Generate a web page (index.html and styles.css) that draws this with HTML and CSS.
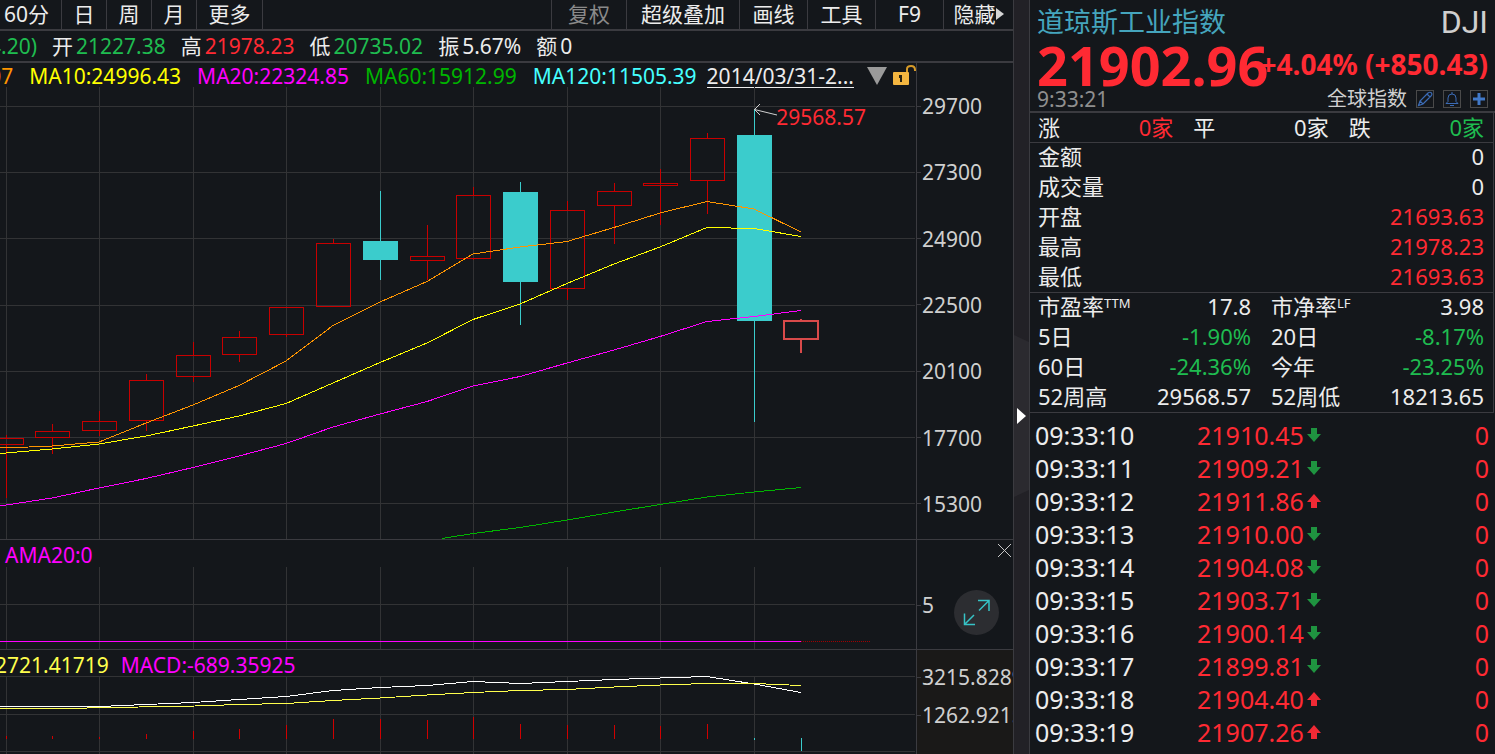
FILE: index.html
```html
<!DOCTYPE html>
<html lang="zh-CN">
<head>
<meta charset="utf-8">
<title>道琼斯工业指数 DJI</title>
<link rel="stylesheet" href="styles.css">
</head>
<body>
<main class="terminal">
  <section class="chart">
    <nav class="toolbar">
      <div class="tabs">
        <button class="tab tab-first">60分</button>
        <button class="tab">日</button>
        <button class="tab">周</button>
        <button class="tab">月</button>
        <button class="tab tab-more">更多</button>
      </div>
      <div class="tools">
        <button class="tool tool-adjust" disabled>复权</button>
        <button class="tool tool-overlay">超级叠加</button>
        <button class="tool">画线</button>
        <button class="tool">工具</button>
        <button class="tool">F9</button>
        <button class="tool tool-hide">隐藏<svg width="8" height="12" viewBox="0 0 8 12"><path d="M0 0L8 6L0 12Z" fill="#d5d5d5"/></svg></button>
      </div>
    </nav>

    <div class="summary">
      <span class="down">4.20)</span>
      <span class="pair">开<b class="down">21227.38</b></span>
      <span class="pair">高<b class="up">21978.23</b></span>
      <span class="pair">低<b class="down">20735.02</b></span>
      <span class="pair">振<b>5.67%</b></span>
      <span class="pair">额<b>0</b></span>
    </div>

    <div class="pane pane-price">
      <div class="plot">
        <div class="legend legend-ma">
          <span class="ma5">07</span>
          <span class="ma10">MA10:24996.43</span>
          <span class="ma20">MA20:22324.85</span>
          <span class="ma60">MA60:15912.99</span>
          <span class="ma120">MA120:11505.39</span>
          <button class="range">2014/03/31-2...</button>
          <button class="icon-button" aria-label="展开"><svg width="20" height="18" viewBox="0 0 20 18"><path d="M0 0H20L10 18Z" fill="#9a9a9a"/></svg></button>
          <button class="icon-button icon-lock" aria-label="锁定"><svg width="23" height="20" viewBox="0 0 23 20"><rect x="0" y="7" width="16" height="13" rx="1" fill="#f4b640"/><path d="M14 7V4Q14 1 18 1Q22 1 22 5V6" fill="none" stroke="#d69a28" stroke-width="2"/><path d="M6 10H9V17H7V13H6Z" fill="#2a2210"/></svg></button>
        </div>
        <svg class="canvas" viewBox="0 87 916 452" preserveAspectRatio="none">
          <path class="grid-line" d="M6.5 87V539M99.5 87V539M193.5 87V539M286.5 87V539M380.5 87V539M473.5 87V539M567.5 87V539M660.5 87V539M754.5 87V539M0 106.5H915M0 172.5H915M0 238.5H915M0 305.5H915M0 371.5H915M0 437.5H915M0 503.5H915"/>
          <g class="candle-up">
            <path d="M6.5 435V438M6.5 445V498M-11.5 438.500H23.500V444.500H-11.500ZM52.500 424V431M52.500 438V454M35.500 431.500H69.500V437.500H35.500ZM99.500 411V421M99.500 431V436M82.500 421.500H116.500V430.500H82.500ZM146.500 374V380M146.500 421V431M129.500 380.500H163.500V420.500H129.500ZM193.500 342V355M193.500 377V382M176.500 355.500H210.500V376.500H176.500ZM239.500 331V337M239.500 355V362M222.500 337.500H256.500V354.500H222.500ZM286.500 335V337M269.500 307.500H303.500V334.500H269.500ZM333.500 239V243M316.500 243.500H350.500V306.500H316.500ZM427.500 225V256M427.500 261V280M410.500 256.500H444.500V260.500H410.500ZM473.500 187V195M473.500 259V260M456.500 195.500H490.500V258.500H456.500Z"/>
            <path d="M567.500 201V210M567.500 289V300M550.500 210.500H584.500V288.500H550.500ZM614.500 183V191M614.500 206V244M597.500 191.500H631.500V205.500H597.500ZM660.500 169V183M660.500 186V225M643.500 183.500H677.500V185.500H643.500ZM707.500 133V138M707.500 181V214M690.500 138.500H724.500V180.500H690.500Z"/>
          </g>
          <g class="candle-down">
            <path d="M380.500 191V280M520.500 182V325M754.500 109V422"/>
            <path class="solid" d="M363 241H398V260H363ZM503 192H538V282H503ZM737 135H772V321H737Z"/>
          </g>
          <path class="candle-last" d="M784 321H818V339H784ZM801 319V321M801 340V353"/>
          <polyline class="line ma5" points="0,447.500 29,447 52,446 99,442 146,423 193,405 239,385.500 286,361 333,325.500 380,302 427,281.500 473,254 520,247 567,241.500 614,227.500 660,213 707,201.500 754,209 801,232"/>
          <polyline class="line ma10" points="0,453.500 52,449 99,444 146,436 193,426 239,416 286,403.500 333,383 380,362.500 427,343 473,319.500 520,304 567,283.500 614,264 660,247 707,227.500 754,228.500 801,236.500"/>
          <polyline class="line ma20" points="0,506 52,498 99,488 146,478.500 193,467.500 239,456 286,443.500 333,427 380,414 427,401.500 473,386 520,376.500 567,363 614,350 660,336.500 707,321.500 754,316.500 801,310.500"/>
          <polyline class="line ma60" points="442,538.500 473,533.500 520,527.500 567,520 614,512 660,504.500 707,497 754,492 801,487.500"/>
          <path class="pointer" d="M777 115L754.500 109.500M760 104L754.500 109.500L760 115"/>
        </svg>
        <span class="peak up">29568.57</span>
      </div>
      <div class="axis axis-price">
        <span>29700</span><span>27300</span><span>24900</span><span>22500</span><span>20100</span><span>17700</span><span>15300</span>
      </div>
    </div>

    <div class="pane pane-ama">
      <div class="plot">
        <div class="legend legend-ama"><span class="ma20">AMA20:0</span></div>
        <svg class="canvas" viewBox="0 567 916 82" preserveAspectRatio="none">
          <path class="grid-line" d="M6.500 567V649M99.500 567V649M193.500 567V649M286.500 567V649M380.500 567V649M473.500 567V649M567.500 567V649M660.500 567V649M754.500 567V649M0 604.500H915"/>
          <path class="line ma20" d="M0 641.500H801"/>
          <path class="dotted" d="M801 641.500H870"/>
        </svg>
      </div>
      <div class="axis axis-ama"><span>5</span></div>
      <button class="close" aria-label="关闭"><svg width="13" height="13" viewBox="0 0 13 13"><path d="M0 0L13 13M13 0L0 13" stroke="#c8c8c8" stroke-width="1"/></svg></button>
      <button class="expand" aria-label="全屏"><svg width="45" height="45" viewBox="0 0 45 45" fill="none" stroke="#36c3c6" stroke-width="1.500"><path d="M24 10.500H35V21M35 10.500L25 20.500M10.500 23.500V34.500H21M10.500 34.500L20 25"/></svg></button>
    </div>

    <div class="pane pane-macd">
      <div class="plot">
        <div class="legend legend-macd"><span class="dea">2721.41719</span><span class="ma20">MACD:-689.35925</span></div>
        <svg class="canvas" viewBox="0 676 916 78" preserveAspectRatio="none">
          <path class="grid-line" d="M6.500 676V754M99.500 676V754M193.500 676V754M286.500 676V754M380.500 676V754M473.500 676V754M567.500 676V754M660.500 676V754M754.500 676V754M0 676.500H915M0 714.500H915M0 751.500H915"/>
          <polyline class="line dif" points="0,706.500 99,706.500 146,704.500 193,702.500 239,699.500 286,696.500 333,690.500 380,687.500 427,685.500 473,681.500 520,683.500 567,681.500 614,679.500 660,678 707,676.500 754,684 801,692.500"/>
          <polyline class="line dea" points="0,708.500 75,708.500 99,707.500 180,706.500 239,704.500 286,703.500 333,700.500 380,698 427,695 473,692.500 520,690.500 567,689.500 614,687 660,685 707,683.500 754,683.500 801,685.500"/>
          <path class="bar-up" d="M6.500 736V739M52.500 736V739M99.500 737V739M146.500 734V739M193.500 731V739M239.500 729V739M286.500 725V739M333.500 719V739M380.500 719V739M427.500 720V739M473.500 717V739M520.500 724V739M567.500 725V739M614.500 725V739M660.500 726V739M707.500 724V739"/>
          <path class="bar-down" d="M754.500 738V740M801.500 738V751"/>
        </svg>
      </div>
      <div class="axis axis-macd"><span>3215.8289</span><span>1262.9215</span></div>
    </div>
  </section>

  <button class="splitter" aria-label="收起侧栏">
    <svg width="15" height="162" viewBox="0 0 15 162"><path d="M0 0L15 7V155L0 162Z" fill="#2b2a2f"/><path d="M3 73L12 81L3 89Z" fill="#fff"/></svg>
  </button>

  <aside class="quote">
    <header class="quote-head">
      <div class="name-row"><h1 class="name">道琼斯工业指数</h1><span class="code">DJI</span></div>
      <div class="price-row up"><strong class="price">21902.96</strong><strong class="change">+4.04% (+850.43)</strong></div>
      <div class="meta-row">
        <time class="time">9:33:21</time>
        <a class="market" href="#">全球指数</a>
        <button class="mini" aria-label="编辑"><svg width="16" height="16" viewBox="0 0 16 16"><path d="M1.500 14.500L3 10L11 2Q13 .5 14.500 2Q15.500 3.500 14 5L6 13ZM10 3L13 6M3 10L6 13" fill="none" stroke="#3b6bb5" stroke-width="1.200"/></svg></button>
        <button class="mini" aria-label="提醒"><svg width="16" height="16" viewBox="0 0 16 16"><path d="M8 1V3M2 12.500H14L12 10.500V7Q12 3 8 3Q4 3 4 7V10.500ZM6 14.500H10" fill="none" stroke="#3b6bb5"/></svg></button>
        <button class="mini" aria-label="添加"><svg width="16" height="16" viewBox="0 0 16 16"><path d="M8 2V14M2 8H14" fill="none" stroke="#4179c8" stroke-width="3"/></svg></button>
      </div>
    </header>

    <div class="details">
      <dl class="breadth">
        <div><dt>涨</dt><dd class="up">0家</dd></div>
        <div><dt>平</dt><dd>0家</dd></div>
        <div><dt>跌</dt><dd class="down">0家</dd></div>
      </dl>
      <dl class="rows">
        <div><dt>金额</dt><dd>0</dd></div>
        <div><dt>成交量</dt><dd>0</dd></div>
        <div><dt>开盘</dt><dd class="up">21693.63</dd></div>
        <div><dt>最高</dt><dd class="up">21978.23</dd></div>
        <div><dt>最低</dt><dd class="up">21693.63</dd></div>
      </dl>
      <dl class="rows rows-double">
        <div><dt>市盈率<sup>TTM</sup></dt><dd>17.8</dd></div>
        <div><dt>市净率<sup>LF</sup></dt><dd>3.98</dd></div>
        <div><dt>5日</dt><dd class="down">-1.90%</dd></div>
        <div><dt>20日</dt><dd class="down">-8.17%</dd></div>
        <div><dt>60日</dt><dd class="down">-24.36%</dd></div>
        <div><dt>今年</dt><dd class="down">-23.25%</dd></div>
        <div><dt>52周高</dt><dd>29568.57</dd></div>
        <div><dt>52周低</dt><dd>18213.65</dd></div>
      </dl>
    </div>

    <svg class="symbols" width="0" height="0">
      <symbol id="arrow-down" viewBox="0 0 14 14"><path d="M4 0H10V6H14L7 14L0 6H4Z" fill="#1f9440"/></symbol>
      <symbol id="arrow-up" viewBox="0 0 14 14"><path d="M4 14H10V8H14L7 0L0 8H4Z" fill="#f02a35"/></symbol>
    </svg>
    <table class="ticks">
      <tbody>
        <tr><td>09:33:10</td><td class="up">21910.45<svg class="dir"><use href="#arrow-down"/></svg></td><td class="up">0</td></tr>
        <tr><td>09:33:11</td><td class="up">21909.21<svg class="dir"><use href="#arrow-down"/></svg></td><td class="up">0</td></tr>
        <tr><td>09:33:12</td><td class="up">21911.86<svg class="dir"><use href="#arrow-up"/></svg></td><td class="up">0</td></tr>
        <tr><td>09:33:13</td><td class="up">21910.00<svg class="dir"><use href="#arrow-down"/></svg></td><td class="up">0</td></tr>
        <tr><td>09:33:14</td><td class="up">21904.08<svg class="dir"><use href="#arrow-down"/></svg></td><td class="up">0</td></tr>
        <tr><td>09:33:15</td><td class="up">21903.71<svg class="dir"><use href="#arrow-down"/></svg></td><td class="up">0</td></tr>
        <tr><td>09:33:16</td><td class="up">21900.14<svg class="dir"><use href="#arrow-down"/></svg></td><td class="up">0</td></tr>
        <tr><td>09:33:17</td><td class="up">21899.81<svg class="dir"><use href="#arrow-down"/></svg></td><td class="up">0</td></tr>
        <tr><td>09:33:18</td><td class="up">21904.40<svg class="dir"><use href="#arrow-up"/></svg></td><td class="up">0</td></tr>
        <tr><td>09:33:19</td><td class="up">21907.26<svg class="dir"><use href="#arrow-up"/></svg></td><td class="up">0</td></tr>
      </tbody>
    </table>
  </aside>
</main>
</body>
</html>
```
FILE: styles.css
```css
* { box-sizing: border-box; }

body {
  margin: 0;
  background: #14171b;
  color: #ececec;
  font-family: "Noto Sans", "Noto Sans CJK SC", sans-serif;
  font-size: 21px;
  line-height: 24px;
}

button {
  margin: 0;
  padding: 0;
  border: 0;
  background: none;
  color: inherit;
  font: inherit;
}

svg { display: block; }
h1, dl, dd { margin: 0; }
b { font-weight: 400; }

.up { color: #ff2a33; }
.down { color: #1fbc50; }

.terminal {
  display: grid;
  grid-template-columns: minmax(0, 1fr) 17px 465px;
  height: 100vh;
  overflow: hidden;
}

/* chart column */
.chart {
  display: flex;
  flex-direction: column;
  min-height: 0;
  overflow: hidden;
}

.toolbar {
  display: flex;
  justify-content: space-between;
  height: 31px;
  border-bottom: 2px solid #3b3b40;
}
.tabs, .tools { display: flex; }
.tab, .tool { padding-bottom: 2px; }
.tab { width: 45px; border-right: 1px solid #3b3b40; }
.tab-first { width: 62px; padding-right: 8px; }
.tab-more { width: 66px; }
.tool { width: 68px; border-left: 1px solid #3b3b40; }
.tool-adjust { width: 75px; color: #8a8a8a; }
.tool-overlay { width: 113px; }
.tool-hide {
  display: flex;
  align-items: center;
  justify-content: center;
  width: 70px;
}

.summary {
  display: flex;
  align-items: center;
  gap: 15px;
  height: 32px;
  margin-left: -11px;
  border-bottom: 2px solid #3b3b40;
  white-space: nowrap;
}
.pair { display: flex; gap: 3px; }

.pane {
  position: relative;
  display: grid;
  grid-template-columns: minmax(0, 1fr) 97px;
  min-height: 0;
}
.pane-price { flex: 476 1 0; }
.pane-ama { flex: 109 1 0; border-top: 1px solid #3b3b40; }
.pane-macd { flex: 104 1 0; border-top: 1px solid #3b3b40; }

.plot {
  position: relative;
  display: flex;
  flex-direction: column;
  min-height: 0;
}
.canvas {
  flex: 1;
  width: 100%;
  min-height: 0;
  shape-rendering: crispEdges;
}
.canvas * { vector-effect: non-scaling-stroke; }

.legend { display: flex; white-space: nowrap; }
.legend-ma {
  align-items: center;
  justify-content: flex-end;
  gap: 16px;
  height: 24px;
  padding-top: 2px;
}
.legend-ama { height: 27px; padding: 3px 5px 0; }
.legend-macd { gap: 12px; height: 26px; padding-top: 3px; margin-left: -5px; }

.range {
  margin: 0 3px 0 -6px;
  border-bottom: 1px solid #ececec;
  line-height: 22px;
}
.icon-button { margin-left: -6px; }
.icon-lock { margin-left: -10px; padding-bottom: 2px; }

.ma5 { color: #ff9500; stroke: #ff9500; }
.ma10 { color: #ffff00; stroke: #ffff00; }
.ma20 { color: #ff00ff; stroke: #ff00ff; }
.ma60 { color: #00b400; stroke: #00b400; }
.ma120 { color: #46ffff; }
.dea { color: #ffff4d; stroke: #ffff4d; }
.dif { stroke: #ffffff; }

.grid-line { stroke: #323335; }
.line { fill: none; stroke-width: 1px; }
.dotted { stroke: #a00000; stroke-dasharray: 1 1; }
.candle-up { fill: none; stroke: #c80000; }
.candle-down { fill: none; stroke: #3bcccc; }
.solid { fill: #3bcccc; stroke: none; }
.candle-last { fill: none; stroke: #d94a4a; stroke-width: 2px; }
.pointer { fill: none; stroke: #d0d0d0; shape-rendering: auto; }
.bar-up { stroke: #d00000; }
.bar-down { stroke: #3bcccc; }

.peak {
  position: absolute;
  right: 50px;
  top: 42px;
}

.axis {
  display: flex;
  flex-direction: column;
  border-left: 1px solid #3b3b40;
  color: #cfcfcf;
  overflow: hidden;
}
.axis span {
  display: flex;
  align-items: center;
  gap: 1px;
}
.axis span::before {
  content: "";
  flex: none;
  width: 4px;
  height: 1px;
  background: #3b3b40;
}
.axis-price { justify-content: space-between; padding: 31px 0 23px; }
.axis-ama { padding-top: 53px; }
.axis-macd { gap: 14px; padding-top: 15px; background: #1a1918; }

.close { position: absolute; top: 4px; right: 2px; }
.expand {
  position: absolute;
  right: 14px;
  bottom: 14px;
  border-radius: 50%;
  background: #2c2d31;
}

/* splitter */
.splitter {
  display: flex;
  align-items: center;
  padding-top: 78px;
  border: solid #3b3b40;
  border-width: 0 1px;
  background: #222126;
}

/* quote column */
.quote { overflow: hidden; }
.quote-head {
  height: 113px;
  padding: 0 7px;
  border-bottom: 2px solid #3b3b40;
}
.name-row, .price-row, .meta-row {
  display: flex;
  align-items: center;
}
.name-row { justify-content: space-between; height: 43px; }
.name {
  color: #45a5bd;
  font-size: 27px;
  font-weight: 400;
  line-height: 40px;
}
.code {
  color: #cfcfcf;
  font-family: Roboto, sans-serif;
  font-size: 32px;
}
.price-row { justify-content: space-between; height: 45px; white-space: nowrap; }
.price { width: 222px; font-size: 54px; line-height: 45px; }
.change { padding-bottom: 4px; font-size: 28px; }
.meta-row { gap: 9px; height: 22px; }
.time { flex: 1; color: #8f8f8f; }
.market {
  color: #cfcfcf;
  font-size: 20px;
  text-decoration: none;
}
.mini { border: 1px solid #4a4a4a; }

.details {
  margin-right: 1px;
  border-right: 1px solid #3b3b40;
  border-bottom: 1px solid #3b3b40;
  font-size: 22px;
}
.breadth div, .rows div {
  display: flex;
  justify-content: space-between;
}
.breadth {
  display: grid;
  grid-template-columns: repeat(3, 1fr);
  gap: 20px;
  height: 29px;
  padding: 0 9px 0 8px;
  line-height: 28px;
}
.rows {
  display: grid;
  grid-auto-rows: 30px;
  padding: 0 9px 0 8px;
  line-height: 28px;
  box-shadow: inset 0 1px #3b3b40;
}
.rows-double { grid-template-columns: 1fr 1fr; column-gap: 20px; }
.rows sup {
  font-size: 13px;
  line-height: 13px;
  vertical-align: 7px;
}

.symbols { position: absolute; }
.ticks {
  width: 100%;
  margin-top: 6px;
  border-collapse: collapse;
  font-size: 25px;
  line-height: 33px;
}
.ticks td { height: 33px; padding: 0; }
.ticks td:first-child { width: 167px; padding-left: 5px; }
.ticks td:last-child { padding-right: 6px; text-align: right; }
.dir {
  display: inline-block;
  width: 14px;
  height: 14px;
  margin-left: 3px;
  vertical-align: 3px;
}
```
